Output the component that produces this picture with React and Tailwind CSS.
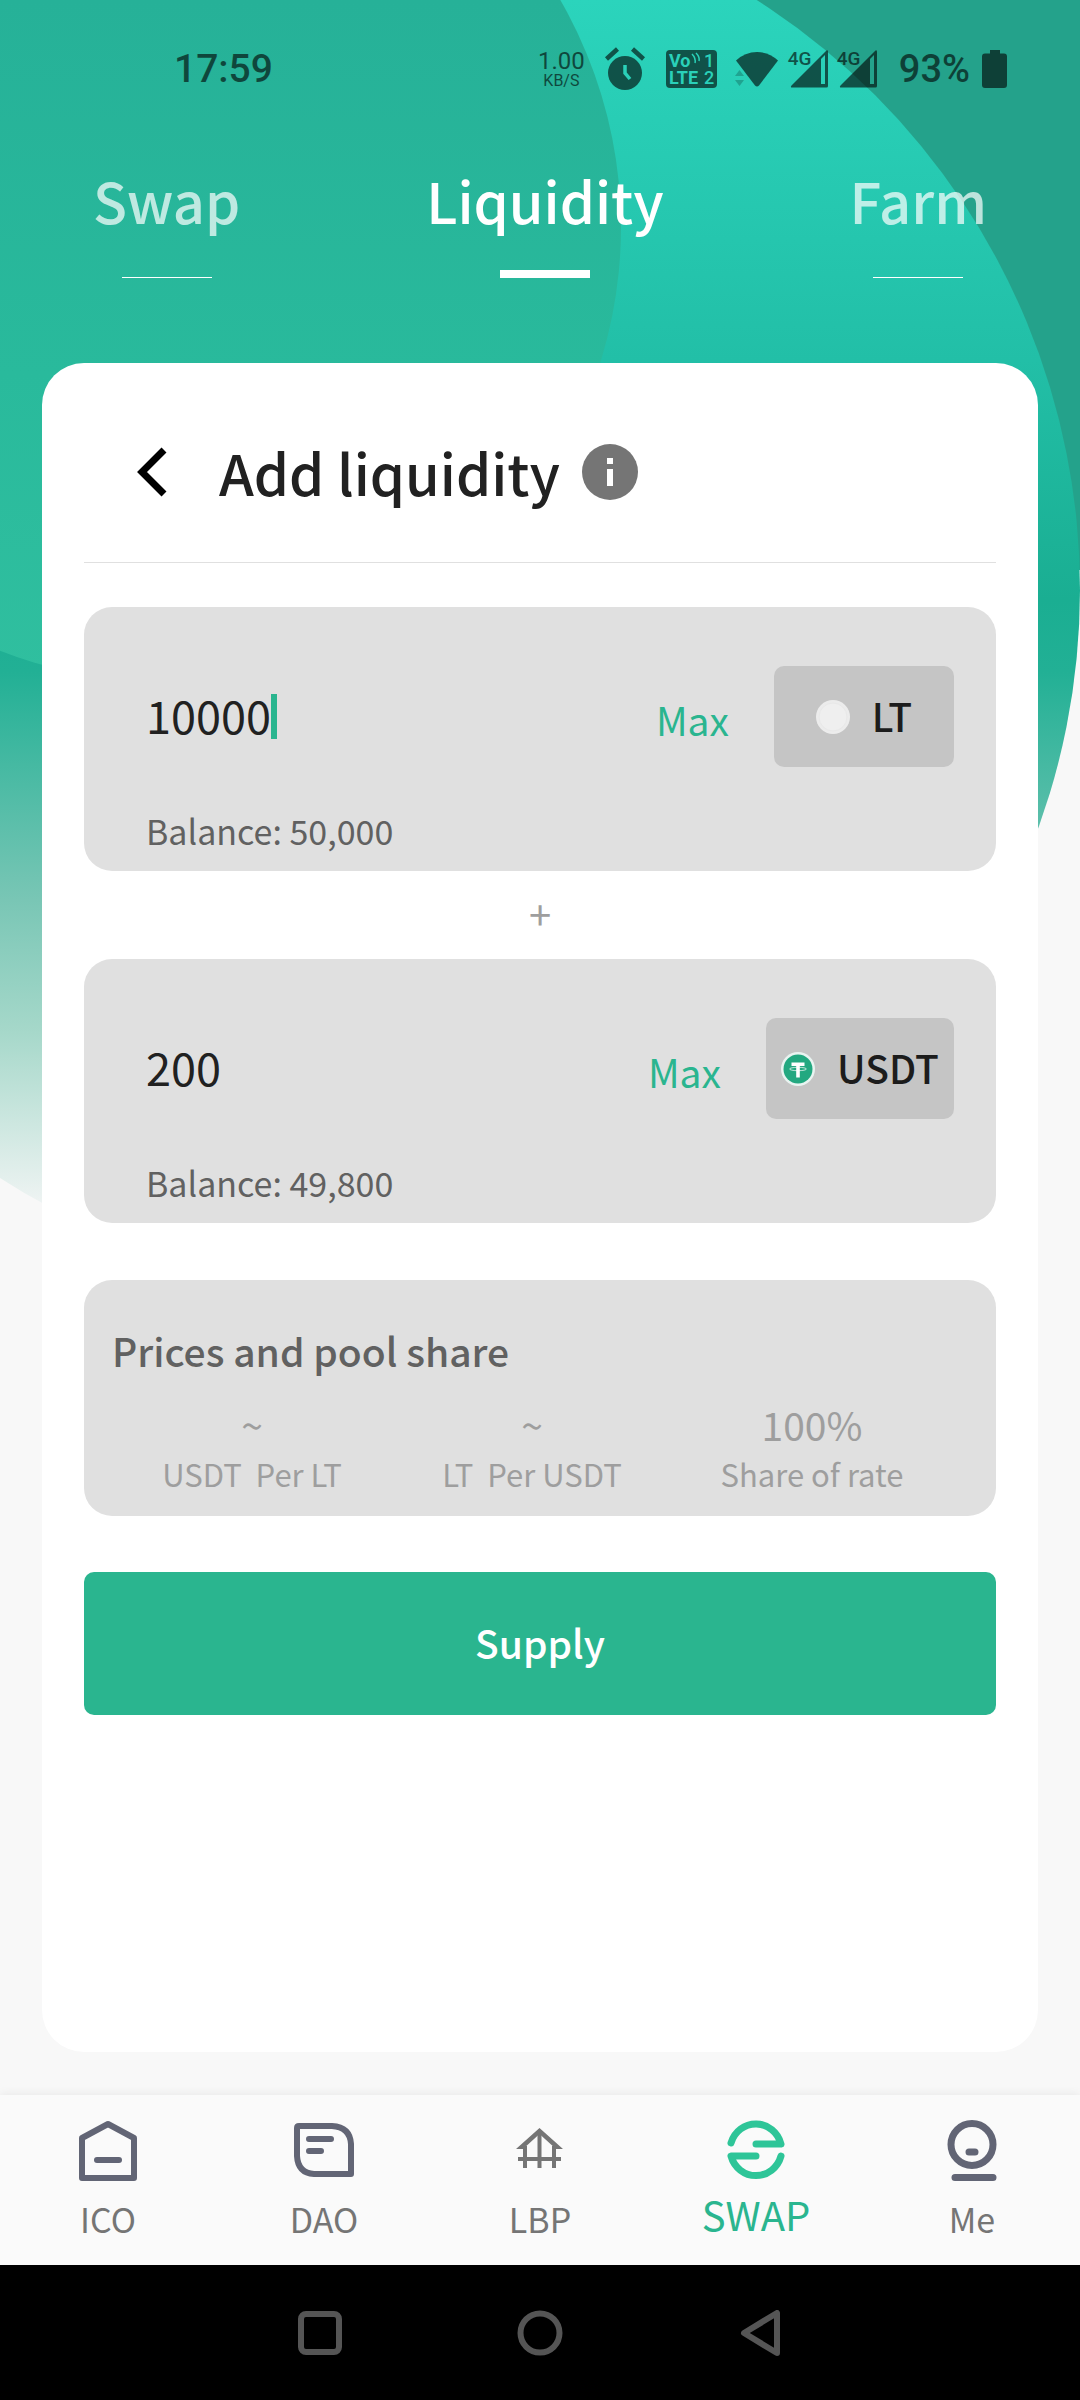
const CJK = "font-['Noto_Sans_CJK_SC',sans-serif]";

function Backdrop() {
  return (
    <svg
      className="absolute inset-x-0 top-0 w-full"
      viewBox="0 0 1080 1300"
      aria-hidden="true"
    >
      <defs>
        <linearGradient id="sea" gradientUnits="userSpaceOnUse" x1="0" y1="0" x2="0" y2="1200">
          <stop offset="0" stopColor="#2bd4bc" />
          <stop offset="0.3" stopColor="#22bfa7" />
          <stop offset="0.5" stopColor="#1aae92" />
          <stop offset="0.56" stopColor="#22b095" />
          <stop offset="0.75" stopColor="#79c6b5" />
          <stop offset="0.86" stopColor="#a6d8ca" />
          <stop offset="1" stopColor="#edf3f2" />
        </linearGradient>
        <linearGradient id="leaf" gradientUnits="userSpaceOnUse" x1="0" y1="0" x2="0" y2="680">
          <stop offset="0" stopColor="#26b198" />
          <stop offset="0.55" stopColor="#29ba9c" />
          <stop offset="1" stopColor="#30bf9f" />
        </linearGradient>
      </defs>
      <rect x="540" width="540" height="570" fill="#24a28b" />
      <circle cx="380" cy="590" r="700" fill="url(#sea)" />
      <circle cx="166" cy="227" r="455" fill="url(#leaf)" />
    </svg>
  );
}

function SignalIcon() {
  return (
    <div className="relative h-[40px] w-[42px]">
      <span className="absolute top-0 left-0 text-[19px] leading-[20px] font-medium">4G</span>
      <svg className="h-[40px] w-[42px]" viewBox="0 0 42 40" fill="currentColor" aria-hidden="true">
        <path
          fillRule="evenodd"
          d="M38.500 1.500Q40 0.500 40 3V37Q40 38.500 38.500 38.500H4Q2 38.500 3.500 36.500ZM33 10V35H37V6Z"
        />
      </svg>
    </div>
  );
}

function StatusBar() {
  return (
    <div className="flex h-[138px] items-center pr-[73px] pl-[174px] font-[Roboto,sans-serif] text-black opacity-60">
      <time className="flex-1 text-[39px] leading-[40px] font-medium">17:59</time>
      <div className="mr-[19px] flex flex-col items-center">
        <span className="text-[24px] leading-[24px]">1.00</span>
        <span className="text-[16px] leading-[16px]">KB/S</span>
      </div>
      <svg className="mr-[20px] h-[44px] w-[42px]" viewBox="0 0 42 44" aria-hidden="true">
        <circle cx="21" cy="26" r="17" />
        <path d="M2.500 12 13.500 2M39.500 12 28.500 2" stroke="#000" strokeWidth="4.500" fill="none" />
        <path d="M21 18v8l5 6" stroke="#2bd3bb" strokeWidth="3.500" fill="none" />
      </svg>
      <svg
        className="mr-[18px] h-[40px] w-[51px]"
        viewBox="0 0 51 40"
        fontFamily="Roboto, sans-serif"
        fontWeight="700"
        aria-hidden="true"
      >
        <rect y="1" width="51" height="38" rx="4" />
        <g fill="#2bd3bb">
          <text x="3" y="18" fontSize="18">Vo</text>
          <text x="3" y="35" fontSize="18">LTE</text>
          <text x="38" y="18" fontSize="18" fontWeight="500">1</text>
          <text x="38" y="35" fontSize="18" fontWeight="500">2</text>
        </g>
        <path d="M26 5q4 4 3 9M30 4q4 4 3 8" stroke="#2bd3bb" strokeWidth="1.500" fill="none" />
      </svg>
      <svg className="mr-[9px] h-[38px] w-[44px]" viewBox="0 0 44 38" aria-hidden="true">
        <path d="M1 10.500Q10 2 22 2T43 10.500L24 35.500q-2 2-4 0Z" />
        <path d="M0 26h9l-4.500-6ZM0 30h9l-4.500 6Z" opacity="0.350" />
      </svg>
      <div className="mr-[20px] flex gap-[7px]">
        <SignalIcon />
        <SignalIcon />
      </div>
      <span className="mr-[12px] text-[38px] leading-[40px] font-medium">93%</span>
      <svg className="h-[38px] w-[25px]" viewBox="0 0 25 38" aria-hidden="true">
        <path d="M8 0h10v3.500h4q3 0 3 3V35q0 3-3 3H3q-3 0-3-3V6.500q0-3 3-3h5Z" />
      </svg>
    </div>
  );
}

const tabs = [
  { name: "Swap", active: false },
  { name: "Liquidity", active: true },
  { name: "Farm", active: false },
];

function TopTabs() {
  return (
    <nav className="flex h-[225px] justify-around text-[56px] leading-[72px] font-medium">
      {tabs.map((t) => (
        <button
          key={t.name}
          type="button"
          className={
            t.active
              ? "flex h-[140px] flex-col items-center justify-between px-[42px] pt-[26px] text-white"
              : "flex h-[140px] flex-col items-center justify-between px-[42px] pt-[26px] text-white/70"
          }
        >
          {t.name}
          <span className={t.active ? "h-[8px] w-[90px] bg-white" : "h-px w-[90px] bg-white"} />
        </button>
      ))}
    </nav>
  );
}

function TetherIcon() {
  return (
    <svg className="h-[34px] w-[34px]" viewBox="0 0 34 34" aria-hidden="true">
      <circle cx="17" cy="17" r="17" fill="#e9f4f1" />
      <circle cx="17" cy="17" r="14.500" fill="#23a880" />
      <path d="M10.500 10.500h13V14h-4.700V25.500h-3.600V14h-4.700Z" fill="#fff" />
      <ellipse cx="17" cy="17" rx="8.500" ry="1.700" stroke="#fff" strokeWidth="0.700" fill="none" />
    </svg>
  );
}

function BlankCoin() {
  return (
    <svg className="h-[34px] w-[34px]" viewBox="0 0 34 34" aria-hidden="true">
      <circle cx="17" cy="17" r="17" fill="#ececec" />
      <circle cx="17" cy="17" r="14" fill="#efefef" stroke="#e8e8e8" />
    </svg>
  );
}

function AmountBox({ label, value, balance, token, icon, focused, chip }) {
  return (
    <div className="flex h-[264px] flex-col rounded-[28px] bg-[#e0e0e0] pt-[59px] pr-[42px] pl-[62px]">
      <div className="flex h-[101px] items-center">
        <div className="flex flex-1 items-center">
          <input
            aria-label={label}
            defaultValue={value}
            inputMode="decimal"
            className="field-sizing-content bg-transparent pb-[4px] text-[45px] leading-[64px] text-[#212121] caret-[#2ab58f] outline-none"
          />
          {focused && <span className="h-[45px] w-[6px] shrink-0 bg-[#2ab58f]" />}
        </div>
        <button type="button" className="mr-[45px] pt-[4px] text-[39px] leading-[56px] text-[#2ab58f]">
          Max
        </button>
        <button type="button" className={chip}>
          {icon}
          <span className="pb-[4px]">{token}</span>
        </button>
      </div>
      <p className="mt-[40px] text-[34px] leading-[48px] text-[#616161]">Balance: {balance}</p>
    </div>
  );
}

const rates = [
  { value: "~", label: "USDT  Per LT" },
  { value: "~", label: "LT  Per USDT" },
  { value: "100%", label: "Share of rate" },
];

function IcoIcon() {
  return (
    <svg className="h-[62px] w-[60px]" viewBox="0 0 60 62" fill="none" stroke="#626575" strokeWidth="6" aria-hidden="true">
      <path d="M4 59V19L30 5 56 19V59Z" strokeLinejoin="round" />
      <path d="M19 41H41" strokeLinecap="round" />
    </svg>
  );
}

function DaoIcon() {
  return (
    <svg className="h-[62px] w-[60px]" viewBox="0 0 60 62" fill="none" stroke="#626575" strokeWidth="6" aria-hidden="true">
      <path d="M5 7H38Q56 8 57 25V55H20Q4 54 3 37V9Q3 7 5 7Z" strokeLinejoin="round" />
      <path d="M15 20H37M15 32H27" strokeLinecap="round" />
    </svg>
  );
}

function LbpIcon() {
  return (
    <svg className="h-[62px] w-[60px]" viewBox="0 0 60 62" aria-hidden="true">
      <path d="M6 30 29.500 9 53 30H46L29.500 15 13 30Z" fill="#757575" />
      <path d="M15 27V49M29.500 12V49M44 27V49M8 40H51" stroke="#757575" strokeWidth="4" fill="none" />
    </svg>
  );
}

function SwapIcon() {
  return (
    <svg
      className="h-[62px] w-[60px]"
      viewBox="0 0 60 62"
      fill="none"
      stroke="#2ec598"
      strokeWidth="7"
      strokeLinecap="round"
      strokeLinejoin="round"
      aria-hidden="true"
    >
      <path d="M5 24A26 27 0 0 1 55 25H30" />
      <path d="M55 37A26 27 0 0 1 5 37H30" />
    </svg>
  );
}

function MeIcon() {
  return (
    <svg className="h-[62px] w-[60px]" viewBox="0 0 60 62" fill="none" stroke="#626575" strokeWidth="7" strokeLinecap="round" aria-hidden="true">
      <circle cx="30" cy="25.500" r="21" />
      <path d="M27 33H33M13 58.500H51" />
    </svg>
  );
}

const navItems = [
  { name: "ICO", icon: <IcoIcon /> },
  { name: "DAO", icon: <DaoIcon /> },
  { name: "LBP", icon: <LbpIcon /> },
  { name: "SWAP", icon: <SwapIcon />, active: true },
  { name: "Me", icon: <MeIcon /> },
];

function BottomNav() {
  return (
    <nav className="grid h-[170px] grid-cols-5 bg-[#fafafa] shadow-[0_-2px_8px_rgba(0,0,0,0.06)]">
      {navItems.map((n) => (
        <a key={n.name} href={"#" + n.name} className="flex flex-col items-center pt-[24px]">
          {n.icon}
          <span
            className={
              n.active
                ? "mt-[5px] text-[40px] leading-[56px] text-[#2ab58f]"
                : "mt-[14px] text-[34px] leading-[48px] text-[#757575]"
            }
          >
            {n.name}
          </span>
        </a>
      ))}
    </nav>
  );
}

function SystemBar() {
  return (
    <div className="flex h-[135px] items-center justify-center gap-[174px] bg-black">
      <button type="button" aria-label="Recent apps">
        <svg className="h-[46px] w-[46px]" viewBox="0 0 46 46" fill="none" stroke="#555" strokeWidth="6" aria-hidden="true">
          <rect x="4" y="4" width="38" height="38" rx="5" />
        </svg>
      </button>
      <button type="button" aria-label="Home">
        <svg className="h-[46px] w-[46px]" viewBox="0 0 46 46" fill="none" stroke="#555" strokeWidth="6" aria-hidden="true">
          <circle cx="23" cy="23" r="19.500" />
        </svg>
      </button>
      <button type="button" aria-label="Back">
        <svg className="h-[46px] w-[46px]" viewBox="0 0 46 46" fill="none" stroke="#555" strokeWidth="6" strokeLinejoin="round" aria-hidden="true">
          <path d="M40 3V43L7 23Z" />
        </svg>
      </button>
    </div>
  );
}

export default function App() {
  return (
    <div className={"relative flex min-h-screen flex-col bg-[#f8f8f8] " + CJK}>
      <Backdrop />
      <div className="relative flex flex-1 flex-col">
        <StatusBar />
        <TopTabs />
        <main className="mx-[42px] mb-[43px] flex-1 rounded-[42px] bg-white px-[42px]">
          <header className="flex h-[200px] items-center border-b border-[#e0e0e0] pt-[18px] pl-[52px]">
            <button type="button" aria-label="Back">
              <svg className="h-[50px] w-[32px]" viewBox="0 0 32 50" fill="none" stroke="#000" strokeWidth="7" aria-hidden="true">
                <path d="M28 3 6 25 28 47" />
              </svg>
            </button>
            <h1 className="ml-[51px] text-[56px] leading-[80px] font-medium text-[#212121]">Add liquidity</h1>
            <button type="button" aria-label="About adding liquidity" className="ml-[22px]">
              <svg className="h-[56px] w-[56px]" viewBox="0 0 56 56" aria-hidden="true">
                <circle cx="28" cy="28" r="28" fill="#757575" />
                <path d="M25 14h6v6h-6ZM25 25h6v17h-6Z" fill="#fff" />
              </svg>
            </button>
          </header>
          <form className="pt-[44px]" onSubmit={(e) => e.preventDefault()}>
            <AmountBox
              label="LT amount"
              value="10000"
              balance="50,000"
              token="LT"
              icon={<BlankCoin />}
              focused
              chip="flex h-full w-[180px] items-center justify-center gap-[22px] rounded-[10px] bg-[#c5c5c5] text-[39px] leading-[56px] font-medium text-[#1c1c1c]"
            />
            <p className="h-[88px] text-center text-[40px] leading-[84px] text-[#9e9e9e]">+</p>
            <AmountBox
              label="USDT amount"
              value="200"
              balance="49,800"
              token="USDT"
              icon={<TetherIcon />}
              chip="flex h-full w-[188px] items-center justify-center gap-[22px] rounded-[10px] bg-[#c5c5c5] text-[39px] leading-[56px] font-medium text-[#1c1c1c]"
            />
            <section className="mt-[57px] h-[236px] rounded-[28px] bg-[#e0e0e0] pt-[42px] pr-[44px] pl-[28px] text-[#9e9e9e]">
              <h2 className="text-[39px] leading-[56px] font-medium text-[#616161]">Prices and pool share</h2>
              <div className="grid grid-cols-3 pt-[18px] text-center">
                {rates.map((r) => (
                  <div key={r.label}>
                    <p className="text-[39px] leading-[56px]">{r.value}</p>
                    <p className="text-[31px] leading-[44px] whitespace-pre">{r.label}</p>
                  </div>
                ))}
              </div>
            </section>
            <button
              type="submit"
              className="mt-[56px] h-[143px] w-full rounded-[10px] bg-[#2ab58f] pb-[2px] text-[39px] font-medium text-white"
            >
              Supply
            </button>
          </form>
        </main>
        <BottomNav />
        <SystemBar />
      </div>
    </div>
  );
}
